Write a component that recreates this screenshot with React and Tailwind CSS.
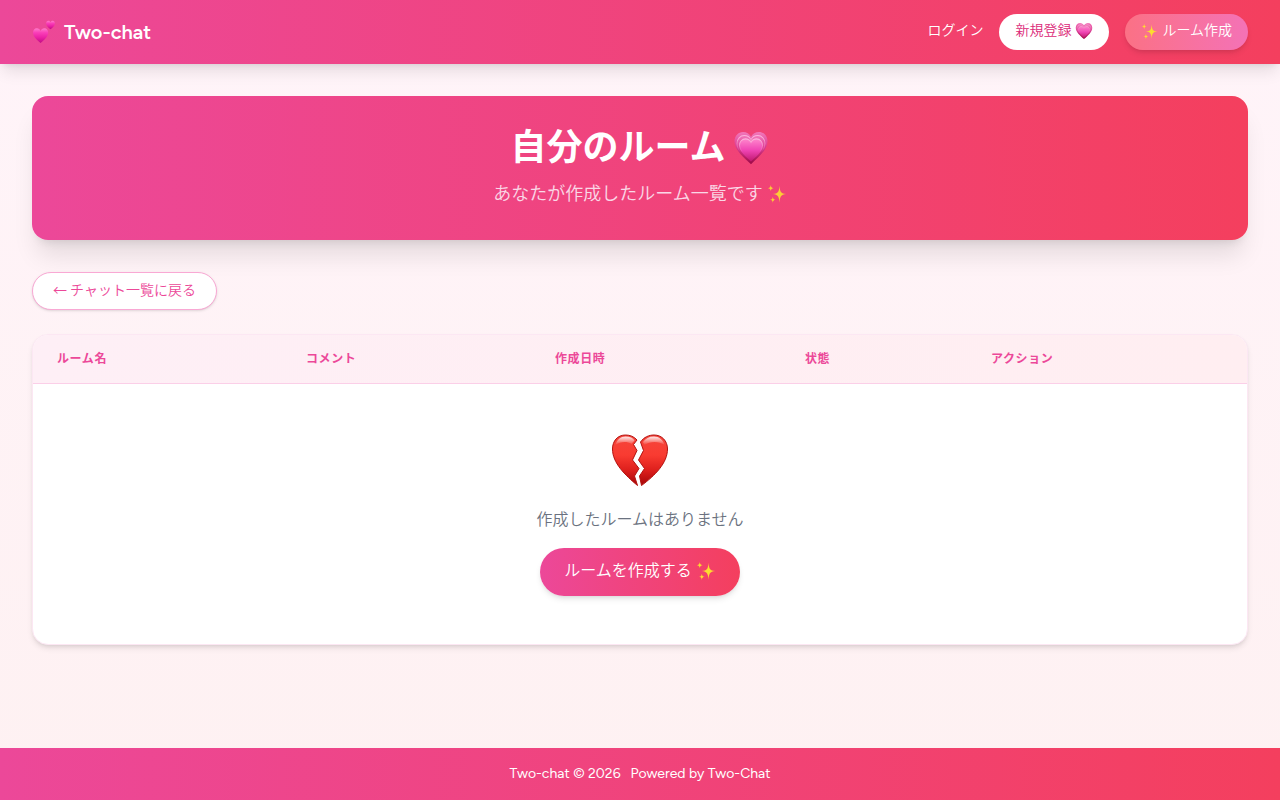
const grad = 'bg-[linear-gradient(90deg,#ec4899,#f43f5e)]';

function HeartsIcon({ className }) {
  return (
    <svg viewBox="0 0 24 24" className={className} aria-hidden="true">
      <defs>
        <linearGradient id="hearts" x1="0" y1="0" x2="0" y2="1">
          <stop offset="0" stopColor="#ff7ccb" />
          <stop offset="0.3" stopColor="#fa3fb8" />
          <stop offset="0.65" stopColor="#ea1fa4" />
          <stop offset="1" stopColor="#c00d84" />
        </linearGradient>
      </defs>
      <path d="M8.6 23C4.6 20 1 16.4 1 12.600C1 10.100 2.600 8.200 4.800 8.200C6.600 8.200 7.900 9.300 8.600 10.900C9.300 9.300 10.600 8.200 12.400 8.200C14.600 8.200 16.200 10.100 16.200 12.600C16.200 16.400 12.600 20 8.600 23Z" fill="url(#hearts)" />
      <path d="M18.500 9.200C16.200 7.500 14.100 5.600 14.100 3.400C14.100 1.900 15.100 0.800 16.400 0.800C17.400 0.800 18.100 1.400 18.500 2.300C18.900 1.400 19.600 0.800 20.600 0.800C21.900 0.800 22.900 1.900 22.900 3.400C22.900 5.600 20.800 7.500 18.500 9.200Z" fill="url(#hearts)" />
    </svg>
  );
}

function GrowingHeart({ className }) {
  const heart = 'M12 22.8C7.500 18.500 1 13.500 1 7.500C1 4 3.500 1.300 6.700 1.300C9 1.300 11 2.500 12 4.500C13 2.500 15 1.300 17.300 1.300C20.500 1.300 23 4 23 7.500C23 13.500 16.500 18.500 12 22.800Z';
  return (
    <svg viewBox="0 0 24 24" className={className} aria-hidden="true">
      <defs>
        <linearGradient id="outer" x1="0" y1="0" x2="0" y2="1">
          <stop offset="0" stopColor="#f279bb" />
          <stop offset="0.45" stopColor="#dc3c93" />
          <stop offset="1" stopColor="#a00a48" />
        </linearGradient>
        <linearGradient id="inner" x1="0" y1="0" x2="0" y2="1">
          <stop offset="0" stopColor="#ff86cc" />
          <stop offset="0.5" stopColor="#f045b4" />
          <stop offset="1" stopColor="#c0186f" />
        </linearGradient>
        <linearGradient id="edge" x1="0" y1="0" x2="0" y2="1">
          <stop offset="0" stopColor="#fcb3dc" />
          <stop offset="0.6" stopColor="#fcb3dc" stopOpacity="0" />
        </linearGradient>
      </defs>
      <path d={heart} fill="url(#outer)" />
      <path d={heart} fill="url(#outer)" stroke="url(#edge)" strokeWidth="0.8" transform="translate(1.800 2.600) scale(0.85)" />
      <path d={heart} fill="url(#inner)" stroke="url(#edge)" strokeWidth="1" transform="translate(3.600 5) scale(0.7)" />
    </svg>
  );
}

function Sparkles({ className }) {
  return (
    <svg viewBox="0 0 24 24" className={className} fill="#fddc30" aria-hidden="true">
      <path d="M15 2C15.600 9.500 16.500 11.300 23 12C16.500 12.700 15.600 15 15 22.500C14.400 15 13.500 12.700 7 12C13.500 11.300 14.400 9.500 15 2Z" />
      <path d="M4.500 1.200C4.800 3.800 5.400 4.600 7.900 5C5.400 5.400 4.800 6.200 4.500 8.800C4.200 6.200 3.600 5.400 1.100 5C3.600 4.600 4.200 3.800 4.500 1.200Z" />
      <path d="M7 15.200C7.300 17.800 7.900 18.600 10.400 19C7.900 19.400 7.300 20.200 7 22.800C6.700 20.200 6.100 19.400 3.600 19C6.100 18.600 6.700 17.800 7 15.200Z" />
    </svg>
  );
}

function BrokenHeart({ className }) {
  return (
    <svg viewBox="0 0 60 60" className={className} aria-hidden="true">
      <defs>
        <linearGradient id="broken" x1="0" y1="0" x2="0" y2="1">
          <stop offset="0" stopColor="#f5453c" />
          <stop offset="0.4" stopColor="#f93b31" />
          <stop offset="0.7" stopColor="#dd1f1c" />
          <stop offset="1" stopColor="#a50508" />
        </linearGradient>
        <linearGradient id="shine" x1="0" y1="0" x2="0" y2="1">
          <stop offset="0" stopColor="#fff" stopOpacity="0.9" />
          <stop offset="1" stopColor="#fff" stopOpacity="0" />
        </linearGradient>
      </defs>
      <g fill="url(#broken)" stroke="#b3120f" strokeWidth="1">
        <path d="M27 8C24 4.500 20 3 15.500 3C7.500 3 2.500 9 2.500 17C2.500 31 15 43 27.500 53.500L24.500 44L29 36.500L22.500 28L27 18.500L23.500 12.500Z" />
        <path d="M30.500 10C34 5 39 3 44 3C52 3 57.500 9 57.500 17C57.500 31 45 43.500 31.500 53.500L29.500 44L34.500 36.500L28.500 28L33.500 18.500Z" />
      </g>
      <path d="M5.500 13C7 7.500 10.500 4.500 15.500 4.500C20 4.500 23 6 24.500 8.500L21.500 12C17 9 10 9.500 5.500 13Z" fill="url(#shine)" />
      <path d="M54.500 13C53 7.500 49 4.500 44 4.500C39 4.500 35.500 6.500 33 10L34.500 13C40 9 49 9 54.500 13Z" fill="url(#shine)" />
    </svg>
  );
}

const columns = [
  { label: 'ルーム名', width: 'w-[249px]' },
  { label: 'コメント', width: 'w-[249px]' },
  { label: '作成日時', width: 'w-[250px]' },
  { label: '状態', width: 'w-[186px]' },
  { label: 'アクション', width: 'w-auto' },
];

export default function App() {
  return (
    <div className="flex min-h-screen flex-col bg-linear-to-b/srgb from-[#fff4f9] to-[#fef1f2] font-['Figtree','Lato','Noto_Sans_CJK_JP',sans-serif]">
      <header className={`${grad} shadow-lg`}>
        <div className="flex h-16 items-center justify-between px-8">
          <a href="#" className="flex items-center gap-2 text-xl font-semibold text-white">
            <HeartsIcon className="size-6" />
            Two-chat
          </a>
          <nav className="flex items-center gap-4 text-sm font-[350] text-white">
            <a href="#" className="pb-0.5">ログイン</a>
            <a href="#" className="flex h-9 items-center gap-1 rounded-full bg-white px-4 pb-0.5 text-[#db2777]">
              新規登録
              <GrowingHeart className="size-[18px]" />
            </a>
            <a href="#" className="flex h-9 items-center gap-1 rounded-full bg-[linear-gradient(90deg,#fb7185,#f472b6)] px-4 pb-0.5 shadow-md">
              <Sparkles className="size-[17px]" />
              ルーム作成
            </a>
          </nav>
        </div>
      </header>

      <main className="flex-1 px-8 py-8">
        <section className={`${grad} mb-8 flex h-36 flex-col items-center rounded-2xl pt-8 text-white shadow-xl`}>
          <h1 className="mb-3 flex items-center gap-2 text-4xl leading-10 font-bold">
            自分のルーム
            <GrowingHeart className="size-9" />
          </h1>
          <p className="flex items-center gap-1 text-lg leading-7 font-[350] text-[#fce7f3] opacity-90">
            あなたが作成したルーム一覧です
            <Sparkles className="size-5" />
          </p>
        </section>

        <a href="#" className="inline-flex h-[38px] items-center rounded-full border border-[#f9a8d4] bg-white px-5 pb-1 font-['Noto_Sans_CJK_JP',sans-serif] text-sm font-[350] text-[#ec4899] shadow-sm">
          ← チャット一覧に戻る
        </a>

        <div className="mt-6 overflow-hidden rounded-2xl border border-[#fce7f3] bg-white shadow-md">
          <table className="w-full table-fixed">
            <thead>
              <tr className="h-12 border-b border-[#fbcfe8] bg-[linear-gradient(90deg,#feeff6,#ffeef1)]">
                {columns.map((col) => (
                  <th key={col.label} className={`${col.width} px-6 text-left text-xs font-bold tracking-wider text-[#ec4899]`}>
                    {col.label}
                  </th>
                ))}
              </tr>
            </thead>
            <tbody>
              <tr>
                <td colSpan={5} className="px-6 py-12">
                  <div className="flex flex-col items-center">
                    <BrokenHeart className="mb-4 size-[60px]" />
                    <p className="mb-4 text-base font-[350] text-[#6b7280]">作成したルームはありません</p>
                    <a href="#" className={`${grad} flex h-12 items-center gap-1 rounded-full px-6 pb-0.5 font-[350] text-white shadow-md`}>
                      ルームを作成する
                      <Sparkles className="size-5" />
                    </a>
                  </div>
                </td>
              </tr>
            </tbody>
          </table>
        </div>
      </main>

      <footer className={`${grad} py-4 text-center text-sm text-white`}>
        <span>Two-chat © 2026</span>
        <span className="ml-2.5">Powered by Two-Chat</span>
      </footer>
    </div>
  );
}
